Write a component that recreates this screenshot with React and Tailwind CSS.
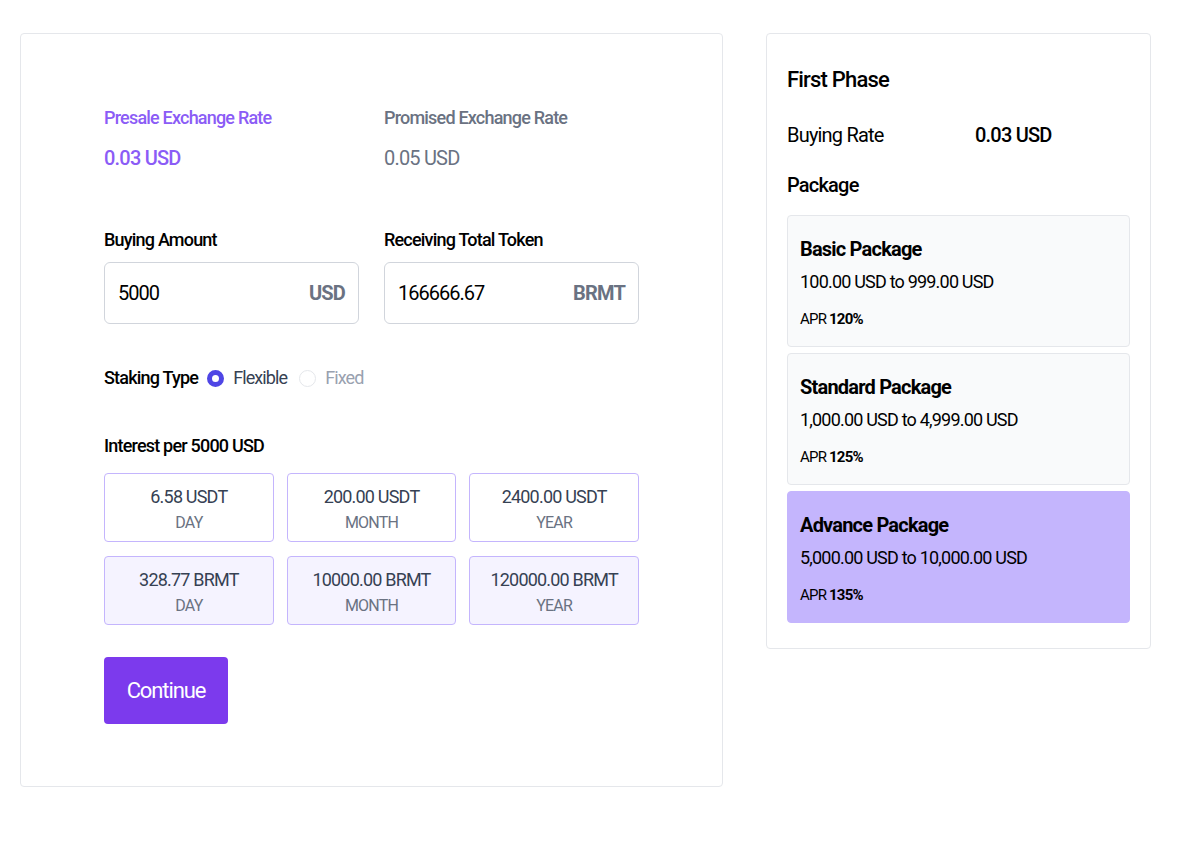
import { useState } from "react";

const interest = [
  { value: "6.58 USDT", period: "DAY", token: false },
  { value: "200.00 USDT", period: "MONTH", token: false },
  { value: "2400.00 USDT", period: "YEAR", token: false },
  { value: "328.77 BRMT", period: "DAY", token: true },
  { value: "10000.00 BRMT", period: "MONTH", token: true },
  { value: "120000.00 BRMT", period: "YEAR", token: true },
];

const packages = [
  { name: "Basic Package", range: "100.00 USD to 999.00 USD", apr: "120%" },
  { name: "Standard Package", range: "1,000.00 USD to 4,999.00 USD", apr: "125%" },
  { name: "Advance Package", range: "5,000.00 USD to 10,000.00 USD", apr: "135%" },
];

export default function App() {
  const [amount, setAmount] = useState("5000");
  const [staking, setStaking] = useState("flexible");
  const rate = 0.03;
  const tokens = amount ? (parseFloat(amount) / rate).toFixed(2) : "";
  const selected = 2;

  return (
    <div className="min-h-screen bg-white font-['Roboto',sans-serif] tracking-[-0.05em] text-black">
      <div className="flex items-start gap-[43px] pl-[20px] pt-[33px]">
        {/* Purchase form */}
        <div className="w-[703px] rounded border border-gray-200 bg-white pl-[83px] pr-[83px] pt-[70px] pb-[62px]">
          <div className="grid grid-cols-2 gap-[25px]">
            <div>
              <p className="text-[18px] leading-[28px] font-medium text-[#8b5cf6]">Presale Exchange Rate</p>
              <p className="mt-3 text-[20px] leading-[28px] font-medium text-[#8b5cf6]">0.03 USD</p>
            </div>
            <div>
              <p className="text-[18px] leading-[28px] font-medium text-gray-500">Promised Exchange Rate</p>
              <p className="mt-3 text-[20px] leading-[28px] text-gray-500">0.05 USD</p>
            </div>
          </div>

          <div className="mt-[54px] grid grid-cols-2 gap-[25px]">
            <div>
              <label className="block text-[18px] leading-[28px] font-medium">Buying Amount</label>
              <div className="mt-2 flex h-[62px] items-center rounded-md border border-gray-300 px-[13px]">
                <input
                  value={amount}
                  onChange={(e) => setAmount(e.target.value)}
                  className="w-full bg-transparent text-[20px] tracking-[-0.05em] text-black outline-none"
                />
                <span className="text-[20px] font-bold text-gray-500">USD</span>
              </div>
            </div>
            <div>
              <label className="block text-[18px] leading-[28px] font-medium">Receiving Total Token</label>
              <div className="mt-2 flex h-[62px] items-center rounded-md border border-gray-300 px-[13px]">
                <input
                  value={tokens}
                  readOnly
                  className="w-full bg-transparent text-[20px] tracking-[-0.05em] text-black outline-none"
                />
                <span className="text-[20px] font-bold text-gray-500">BRMT</span>
              </div>
            </div>
          </div>

          {/* Staking type */}
          <div className="mt-[40px] flex items-center text-[18px] leading-[28px]">
            <span className="font-medium">Staking Type</span>
            <button
              type="button"
              onClick={() => setStaking("flexible")}
              className="ml-[9px] flex items-center gap-[9px] tracking-[-0.05em]"
            >
              <span
                className={
                  staking === "flexible"
                    ? "h-[17px] w-[17px] rounded-full border-[5px] border-[#4f46e5] bg-white"
                    : "h-[17px] w-[17px] rounded-full border border-gray-200 bg-white"
                }
              />
              <span className={staking === "flexible" ? "text-gray-700" : "text-gray-400"}>Flexible</span>
            </button>
            <button
              type="button"
              onClick={() => setStaking("fixed")}
              className="ml-[12px] flex items-center gap-[9px] tracking-[-0.05em]"
            >
              <span
                className={
                  staking === "fixed"
                    ? "h-[17px] w-[17px] rounded-full border-[5px] border-[#4f46e5] bg-white"
                    : "h-[17px] w-[17px] rounded-full border border-gray-200 bg-white"
                }
              />
              <span className={staking === "fixed" ? "text-gray-700" : "text-gray-400"}>Fixed</span>
            </button>
          </div>

          {/* Interest breakdown */}
          <p className="mt-[40px] text-[18px] leading-[28px] font-medium">Interest per 5000 USD</p>
          <div className="mt-[13px] grid grid-cols-3 gap-x-[13px] gap-y-[14px]">
            {interest.map((item, i) => (
              <div
                key={i}
                className={`flex h-[69px] flex-col items-center rounded border border-[#c4b5fd] pt-[10px] ${
                  item.token ? "bg-[#f5f3ff]" : "bg-white"
                }`}
              >
                <span className="text-[18px] leading-[26px] text-gray-700">{item.value}</span>
                <span className="mt-[1px] text-[16px] leading-[24px] text-gray-500">{item.period}</span>
              </div>
            ))}
          </div>

          <button
            type="button"
            className="mt-[32px] h-[67px] w-[124px] rounded bg-[#7c3aed] text-[22px] tracking-[-0.05em] text-white"
          >
            Continue
          </button>
        </div>

        {/* Phase summary */}
        <div className="w-[385px] rounded border border-gray-200 bg-white px-[20px] pt-[31px] pb-[25px]">
          <h2 className="text-[22px] leading-[30px] font-medium">First Phase</h2>
          <div className="mt-[26px] flex text-[20px] leading-[28px]">
            <span className="w-[188px]">Buying Rate</span>
            <span className="font-medium">0.03 USD</span>
          </div>
          <h3 className="mt-[22px] text-[20px] leading-[28px] font-medium">Package</h3>
          <div className="mt-[16px] flex flex-col gap-[6px]">
            {packages.map((p, i) => (
              <div
                key={p.name}
                className={`rounded border px-[12px] pt-[19px] pb-[16px] ${
                  i === selected ? "border-[#c4b5fd] bg-[#c4b5fd]" : "border-gray-200 bg-gray-50"
                }`}
              >
                <p className="text-[20px] leading-[28px] font-bold">{p.name}</p>
                <p className="mt-[5px] text-[18px] leading-[28px]">{p.range}</p>
                <p className="mt-[12px] text-[15px] leading-[22px]">
                  APR <span className="font-bold">{p.apr}</span>
                </p>
              </div>
            ))}
          </div>
        </div>
      </div>
    </div>
  );
}
